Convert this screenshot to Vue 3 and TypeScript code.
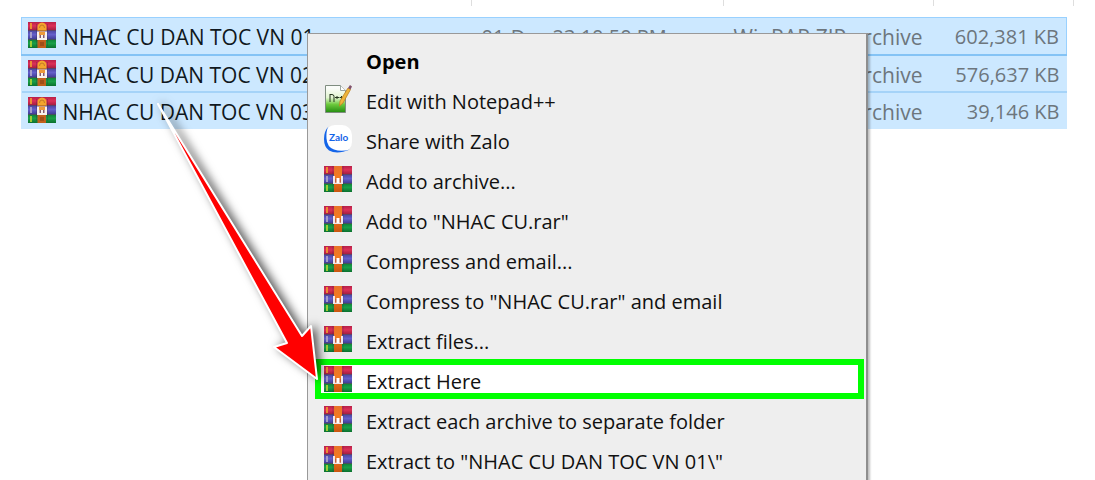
<script setup lang="ts">
interface ArchiveFile {
  name: string
  date: string
  type: string
  size: string
}

interface MenuEntry {
  label: string
  icon: 'none' | 'notepad' | 'zalo' | 'rar'
  bold?: boolean
  marked?: boolean
}

const files: ArchiveFile[] = [
  { name: 'NHAC CU DAN TOC VN 01', date: '01-Dec-23 10:50 PM', type: 'WinRAR ZIP archive', size: '602,381 KB' },
  { name: 'NHAC CU DAN TOC VN 02', date: '01-Dec-23 10:50 PM', type: 'WinRAR ZIP archive', size: '576,637 KB' },
  { name: 'NHAC CU DAN TOC VN 03', date: '01-Dec-23 10:50 PM', type: 'WinRAR ZIP archive', size: '39,146 KB' },
]

const entries: MenuEntry[] = [
  { label: 'Open', icon: 'none', bold: true },
  { label: 'Edit with Notepad++', icon: 'notepad' },
  { label: 'Share with Zalo', icon: 'zalo' },
  { label: 'Add to archive...', icon: 'rar' },
  { label: 'Add to "NHAC CU.rar"', icon: 'rar' },
  { label: 'Compress and email...', icon: 'rar' },
  { label: 'Compress to "NHAC CU.rar" and email', icon: 'rar' },
  { label: 'Extract files...', icon: 'rar' },
  { label: 'Extract Here', icon: 'rar', marked: true },
  { label: 'Extract each archive to separate folder', icon: 'rar' },
  { label: 'Extract to "NHAC CU DAN TOC VN 01\\"', icon: 'rar' },
]
</script>

<template>
  <main class="explorer">
    <svg class="defs" aria-hidden="true">
      <defs>
        <linearGradient id="g-red" x1="0" y1="0" x2="0" y2="1">
          <stop offset="0" stop-color="#b82048" /><stop offset=".45" stop-color="#dc3058" /><stop offset="1" stop-color="#a01c40" />
        </linearGradient>
        <linearGradient id="g-blue" x1="0" y1="0" x2="0" y2="1">
          <stop offset="0" stop-color="#4a449e" /><stop offset=".45" stop-color="#645fca" /><stop offset="1" stop-color="#3e3a92" />
        </linearGradient>
        <linearGradient id="g-green" x1="0" y1="0" x2="0" y2="1">
          <stop offset="0" stop-color="#0f8038" /><stop offset=".45" stop-color="#1aa048" /><stop offset="1" stop-color="#0c702e" />
        </linearGradient>
        <linearGradient id="g-belt" x1="0" y1="0" x2="0" y2="1">
          <stop offset="0" stop-color="#e8742a" /><stop offset=".4" stop-color="#f27a22" /><stop offset="1" stop-color="#c9550f" />
        </linearGradient>
        <linearGradient id="g-page" x1="0" y1="0" x2="0" y2="1">
          <stop offset=".1" stop-color="#fafcf9" /><stop offset=".45" stop-color="#e2f5d0" /><stop offset=".7" stop-color="#6cc93c" /><stop offset="1" stop-color="#238c10" />
        </linearGradient>
        <symbol id="books" viewBox="0 0 28 26">
          <rect width="28" height="8.500" fill="url(#g-red)" />
          <rect y="8.500" width="28" height="9" fill="url(#g-blue)" />
          <rect y="17.500" width="28" height="8.500" fill="url(#g-green)" />
          <path d="M0 8.500h28M0 17.500h28" stroke="#432c45" stroke-opacity=".6" />
          <path d="M3 1v6" stroke="#f4a52c" stroke-width="1.600" />
          <path d="M3 10v6" stroke="#b8b0ce" stroke-width="1.600" />
          <path d="M3 19v6" stroke="#c0dc32" stroke-width="1.600" />
        </symbol>
      </defs>
    </svg>

    <div class="columns" aria-hidden="true"><span /><span /><span /><span /></div>

    <table class="files" aria-label="Files">
      <colgroup><col class="c-name" /><col class="c-date" /><col class="c-type" /><col class="c-size" /></colgroup>
      <tbody>
        <tr v-for="file in files" :key="file.name">
          <td class="name">
            <div class="file">
              <svg class="icon" viewBox="0 0 28 26" aria-hidden="true">
                <use href="#books" />
                <path d="M8.500 2v22M19.500 2v22" stroke="#2a1a3a" stroke-opacity=".25" />
                <rect x="9.500" y="18" width="8.500" height="8" fill="#c2601c" />
                <path d="M12 20h4v4h-4z" fill="#a04e18" />
                <path d="M9.500 9V5q0-4 4.500-4.500Q18.500 1 18.500 5v4z" fill="#f4a52d" />
                <path d="M11.500 6q0-3 2.500-3t2.500 3M10 8.500h8" fill="none" stroke="#c47a28" />
                <path d="M9 9.500h10V18H9z" fill="#f8f2ee" />
                <path d="M11 9.500h6V13h-6z" fill="#ee9a3a" />
                <path d="M11.500 13h1.500v3h-1.500zM15 13h1.500v3H15z" fill="#86596a" />
              </svg>
              <span>{{ file.name }}</span>
            </div>
          </td>
          <td>{{ file.date }}</td>
          <td class="type">{{ file.type }}</td>
          <td class="size">{{ file.size }}</td>
        </tr>
      </tbody>
    </table>

    <div class="menu" role="menu" aria-label="File actions">
      <button
        v-for="entry in entries"
        :key="entry.label"
        type="button"
        role="menuitem"
        class="entry"
        :class="{ bold: entry.bold, marked: entry.marked }"
      >
        <svg v-if="entry.icon === 'rar'" class="icon" viewBox="0 0 28 26" aria-hidden="true">
          <use href="#books" />
          <path d="M9 0v26M19 0v26" stroke="#2a1a3a" stroke-opacity=".25" />
          <rect x="10" width="8" height="26" fill="url(#g-belt)" />
          <path d="M9 10h2v6.500h6V10h2v8H9z" fill="#f0e6ec" />
          <path d="M11 13h6v3.500h-6z" fill="#c45e38" />
          <path d="M12.500 12h3v5h-3z" fill="#fff" />
        </svg>
        <svg v-else-if="entry.icon === 'notepad'" class="icon tall" viewBox="0 0 28 28" aria-hidden="true">
          <path d="M1.500 .5h15l5 5v22h-20z" fill="url(#g-page)" stroke="#7f8d80" />
          <path d="M16.500 .5v5h5" fill="#fff" stroke="#9ba5a0" />
          <path d="M6 17V9M6 9.500h2q2 0 2 2V17M11 12.500h4.500M13 11v3M16 12.500h3M17.500 11v3" fill="none" stroke="#26361f" />
          <path d="m24 3 2.500 1.500L19 18l-3.500 3 .5-5z" fill="#efb53b" stroke="#bd8121" stroke-width=".8" />
          <path d="m24 3 2-3 2 1.500-1.500 3z" fill="#81526c" />
        </svg>
        <svg v-else-if="entry.icon === 'zalo'" class="icon tall" viewBox="0 0 28 28" aria-hidden="true">
          <rect x="1" width="27" height="27" rx="10" fill="#fff" />
          <path d="M4.500 1.500Q0 6 0 14t5 11.500q8 4.500 21-1-9 2.500-16 0-7-2.500-7.500-11T4.500 1.500z" fill="#1464e8" />
          <text x="5" y="16" class="zalo">Zalo</text>
        </svg>
        <span v-else class="icon" />
        <span class="label">{{ entry.label }}</span>
      </button>
    </div>

    <svg class="arrow" viewBox="0 0 180 300" aria-hidden="true">
      <path d="M8 4 152 236l9-10 6 53-43-32 13-4z" fill="red" stroke="#fff" stroke-width="2" stroke-linejoin="round" />
    </svg>
  </main>
</template>

<style>
body {
  margin: 0;
  background: #fff;
}
</style>

<style scoped>
.explorer {
  position: relative;
  box-sizing: border-box;
  min-height: 100vh;
  padding: 0 28px 0 21px;
  overflow: hidden;
  font-family: "Open Sans", "Noto Sans", sans-serif;
  font-size: 20px;
  line-height: 28px;
  color: #111;
}

.defs {
  position: absolute;
  width: 0;
  height: 0;
}

.columns {
  display: grid;
  grid-template-columns: 1fr 252px 210px 140px;
  height: 6px;
  margin: 0 -7px 11px 0;
}

.columns span {
  border-right: 1px solid #dedede;
}

.files {
  width: 100%;
  table-layout: fixed;
  border-collapse: collapse;
  background: #cce8ff;
}

.c-date {
  width: 252px;
}

.c-type {
  width: 210px;
}

.c-size {
  width: 134px;
}

.files tr {
  height: 37px;
  border-bottom: 2px solid #a5d3f8;
}

.files tr:first-child {
  border: 1px solid #99d1ff;
  border-bottom: 2px solid #84c3f5;
}

.files tr:last-child {
  border-bottom: 0;
}

.files td {
  padding: 3px 0 0 11px;
  white-space: nowrap;
  color: #6d767d;
}

.files td.name {
  padding: 0 0 0 6px;
  font-size: 21px;
  color: #101820;
}

.files td.type {
  font-size: 21px;
}

.files td.size {
  padding: 3px 7px 0 0;
  text-align: right;
}

.file {
  display: flex;
  align-items: flex-start;
  gap: 7px;
}

.file span {
  padding-top: 3px;
}

.file .icon {
  margin-top: 2px;
}

.icon {
  flex: none;
  width: 28px;
  height: 26px;
}

.icon.tall {
  height: 28px;
}

.zalo {
  font: 700 10px Lato, sans-serif;
  fill: #1464e8;
}

.menu {
  position: absolute;
  top: 33px;
  left: 307px;
  box-sizing: border-box;
  width: 561px;
  padding: 5px 2px 8px 7px;
  background: #eee;
  border: 1px solid #999;
  border-right: 2px solid #8e8e8e;
  box-shadow: 2px 2px 2px rgba(0, 0, 0, .25);
}

.entry {
  display: flex;
  align-items: center;
  gap: 14px;
  box-sizing: border-box;
  width: 100%;
  height: 40px;
  padding: 0 9px;
  border: 0;
  background: transparent;
  color: #111;
  font: inherit;
  text-align: left;
  white-space: nowrap;
}

.label {
  padding-top: 5px;
}

.entry.bold {
  font-weight: 700;
  color: #000;
}

.entry.marked {
  padding: 0 3px;
  border: 6px solid #0f0;
  background: #fff;
}

.arrow {
  position: absolute;
  top: 100px;
  left: 150px;
  width: 180px;
  height: 300px;
  overflow: visible;
  pointer-events: none;
  filter: drop-shadow(4px 0 5px rgba(0, 0, 0, .65));
}
</style>
